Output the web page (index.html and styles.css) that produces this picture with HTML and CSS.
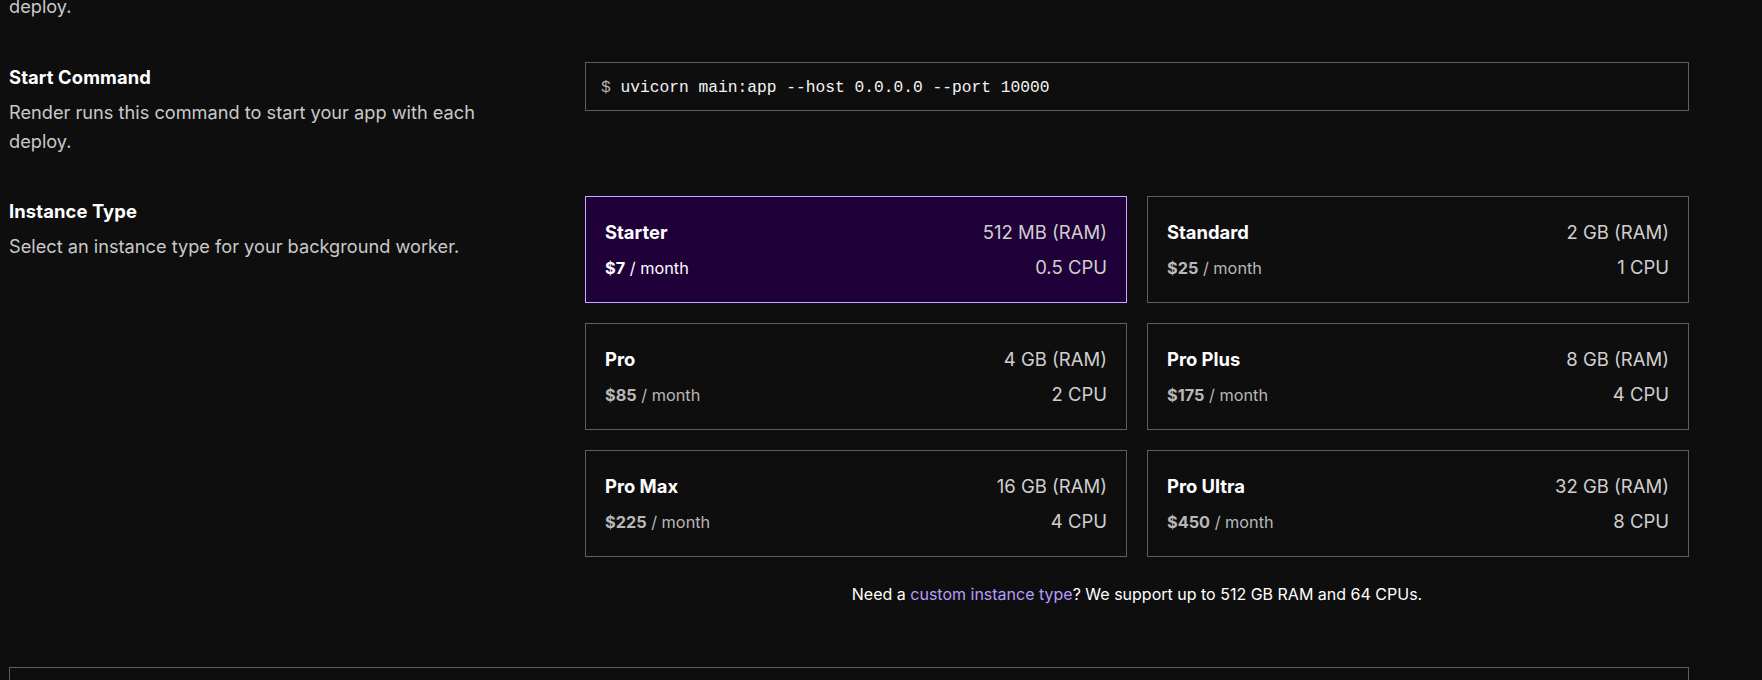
FILE: index.html
```html
<!DOCTYPE html>
<html>
<head>
<meta charset="utf-8">
<link rel="stylesheet" href="styles.css">
</head>
<body>
<div class="form">
  <section class="field field-cut">
    <div class="label-col">
      <p class="desc">deploy.</p>
    </div>
    <div class="input-col"></div>
  </section>

  <section class="field">
    <div class="label-col">
      <h3 class="title">Start Command</h3>
      <p class="desc">Render runs this command to start your app with each deploy.</p>
    </div>
    <div class="input-col">
      <div class="cmd"><span class="prompt">$</span> uvicorn main:app --host 0.0.0.0 --port 10000</div>
    </div>
  </section>

  <section class="field field-instance">
    <div class="label-col">
      <h3 class="title">Instance Type</h3>
      <p class="desc">Select an instance type for your background worker.</p>
    </div>
    <div class="input-col">
      <div class="cards">
        <div class="card selected">
          <div class="row"><span class="name">Starter</span><span class="spec">512 MB (RAM)</span></div>
          <div class="row"><span class="price"><b>$7</b> / month</span><span class="spec">0.5 CPU</span></div>
        </div>
        <div class="card">
          <div class="row"><span class="name">Standard</span><span class="spec">2 GB (RAM)</span></div>
          <div class="row"><span class="price"><b>$25</b> / month</span><span class="spec">1 CPU</span></div>
        </div>
        <div class="card">
          <div class="row"><span class="name">Pro</span><span class="spec">4 GB (RAM)</span></div>
          <div class="row"><span class="price"><b>$85</b> / month</span><span class="spec">2 CPU</span></div>
        </div>
        <div class="card">
          <div class="row"><span class="name">Pro Plus</span><span class="spec">8 GB (RAM)</span></div>
          <div class="row"><span class="price"><b>$175</b> / month</span><span class="spec">4 CPU</span></div>
        </div>
        <div class="card">
          <div class="row"><span class="name">Pro Max</span><span class="spec">16 GB (RAM)</span></div>
          <div class="row"><span class="price"><b>$225</b> / month</span><span class="spec">4 CPU</span></div>
        </div>
        <div class="card">
          <div class="row"><span class="name">Pro Ultra</span><span class="spec">32 GB (RAM)</span></div>
          <div class="row"><span class="price"><b>$450</b> / month</span><span class="spec">8 CPU</span></div>
        </div>
      </div>
      <p class="note">Need a <a href="#" class="link">custom instance type</a>? We support up to 512 GB RAM and 64 CPUs.</p>
    </div>
  </section>

  <div class="panel"></div>
</div>
</body>
</html>
```

FILE: styles.css
```css
html, body {
  margin: 0;
  padding: 0;
  background: #0e0e0e;
  overflow: hidden;
}

body {
  font-family: Inter, "Liberation Sans", Arial, sans-serif;
  color: #ffffff;
  height: 680px;
}

.form {
  width: 1680px;
  margin-left: 9px;
  margin-top: -9px;
  display: flex;
  flex-direction: column;
  gap: 40.5px;
}

.field {
  display: grid;
  grid-template-columns: 576px 1104px;
}

.label-col {
  padding-top: 1px;
  padding-right: 100px;
}

.title {
  margin: 0 0 6px;
  font-size: 18.4px;
  line-height: 28.8px;
  font-weight: 700;
  letter-spacing: 0.1px;
  color: #ffffff;
}

.desc {
  margin: 0;
  font-size: 18.2px;
  line-height: 29.2px;
  color: #c9c9c9;
}

.cmd {
  height: 45px;
  padding: 2px 15px 0;
  border: 1px solid #5e5e5e;
  box-sizing: content-box;
  display: flex;
  align-items: center;
  font-family: "Liberation Mono", "DejaVu Sans Mono", monospace;
  font-size: 16.25px;
  color: #f4f4f4;
  white-space: pre;
}

.prompt {
  color: #b5b5b5;
}

.cards {
  display: grid;
  grid-template-columns: 1fr 1fr;
  gap: 20px;
}

.card {
  border: 1px solid #5e5e5e;
  padding: 21px 19px 21px 19px;
  display: flex;
  flex-direction: column;
  gap: 7px;
  background: #0e0e0e;
}

.card.selected {
  background: #1f0039;
  border-color: #c8a9ff;
}

.row {
  display: flex;
  justify-content: space-between;
  align-items: baseline;
  height: 28px;
  line-height: 28px;
}

.name {
  font-size: 18.4px;
  font-weight: 700;
  color: #ffffff;
}

.spec {
  font-size: 18.5px;
  color: #cfcfcf;
}

.price {
  font-size: 16.3px;
  color: #b8b8b8;
}

.price b {
  font-weight: 700;
}

.selected .price {
  color: #ffffff;
}

.note {
  margin: 25px 0 0;
  text-align: center;
  font-size: 16px;
  line-height: 24px;
  color: #ffffff;
}

.link {
  color: #b79cff;
  text-decoration: none;
}

.panel {
  margin-top: 20px;
  height: 60px;
  border: 1px solid #5e5e5e;
}
```
